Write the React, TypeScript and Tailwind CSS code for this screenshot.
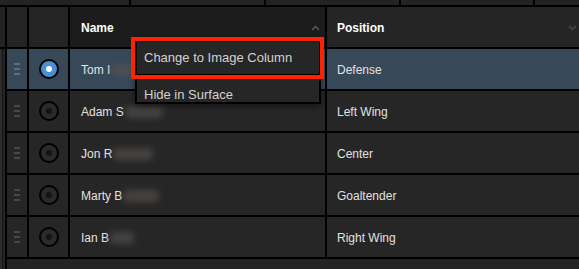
import { useState } from "react";

type Player = { first: string; blur: number; position: string };

const players: Player[] = [
  { first: "Tom I", blur: 26, position: "Defense" },
  { first: "Adam S", blur: 38, position: "Left Wing" },
  { first: "Jon R", blur: 40, position: "Center" },
  { first: "Marty B", blur: 36, position: "Goaltender" },
  { first: "Ian B", blur: 24, position: "Right Wing" },
];

function Grip({ active }: { active: boolean }) {
  const bar = active ? "bg-[#5d6d7b]" : "bg-[#474747]";
  return (
    <div className="flex flex-col gap-[3px]">
      <span className={`block w-[6px] h-[2px] ${bar}`} />
      <span className={`block w-[6px] h-[2px] ${bar}`} />
      <span className={`block w-[6px] h-[2px] ${bar}`} />
    </div>
  );
}

function Radio({ checked }: { checked: boolean }) {
  if (checked) {
    return (
      <div className="w-[20px] h-[20px] rounded-full border-2 border-black bg-[#4a8fd4] flex items-center justify-center">
        <span className="block w-[6px] h-[6px] rounded-full bg-white" />
      </div>
    );
  }
  return (
    <div className="w-[20px] h-[20px] rounded-full border-2 border-black bg-[#2a2a2a] flex items-center justify-center">
      <span className="block w-[6px] h-[6px] rounded-full bg-[#141414]" />
    </div>
  );
}

function Chevron({ up }: { up?: boolean }) {
  return (
    <svg width="9" height="6" viewBox="0 0 9 6" className="shrink-0">
      <polyline
        points={up ? "1,5 4.5,1.5 8,5" : "1,1 4.5,4.5 8,1"}
        fill="none"
        stroke={up ? "#5a5a5a" : "#4a4a4a"}
        strokeWidth="1.4"
      />
    </svg>
  );
}

export default function App() {
  const [selected, setSelected] = useState(0);

  return (
    <div className="w-[579px] h-[269px] overflow-hidden bg-black flex flex-col gap-[2px] font-['Liberation_Sans',Arial,sans-serif] relative">
      {/* strip of cells from the row above */}
      <div className="h-[5px] grid grid-cols-[129px_133px_133px_132px_1fr] gap-[2px]">
        <div className="bg-[#232323]" />
        <div className="bg-[#232323]" />
        <div className="bg-[#232323]" />
        <div className="bg-[#232323]" />
        <div className="bg-[#232323]" />
      </div>

      <div className="flex-1 flex gap-[2px] min-h-0">
        {/* left gutter */}
        <div className="w-[5px] flex flex-col gap-[2px]">
          <div className="h-[40px] bg-[#232323]" />
          <div className="flex-1 bg-[#242424] flex">
            <div className="w-[2px] bg-[#2c2c2c]" />
            <div className="w-[1px] bg-[#151515]" />
          </div>
        </div>

        {/* table */}
        <div className="flex-1 flex flex-col gap-[2px]">
          <div className="grid grid-cols-[20px_39px_255px_1fr] auto-rows-[40px] gap-[2px]">
            <div className="bg-[#242424]" />
            <div className="bg-[#242424]" />
            <div className="bg-[#1c1c1c] flex items-center justify-between pl-[11px] pr-[5px] pt-[2px]">
              <span className="text-[12px] font-bold text-white">Name</span>
              <Chevron up />
            </div>
            <div className="bg-[#252525] flex items-center justify-between pl-[10px] pr-[2px] pt-[2px]">
              <span className="text-[12px] font-bold text-white">Position</span>
              <Chevron />
            </div>

            {players.map((p, i) => {
              const on = i === selected;
              const bg = on ? "bg-[#374858]" : "bg-[#262626]";
              return (
                <div key={p.first} className="contents" onClick={() => setSelected(i)}>
                  <div className={`${bg} flex items-center justify-center`}>
                    <Grip active={on} />
                  </div>
                  <div className={`${bg} flex items-center justify-center`}>
                    <Radio checked={on} />
                  </div>
                  <div className={`${bg} flex items-center pl-[11px] pt-[1px] text-[12px] text-[#e2e2e2]`}>
                    <span>{p.first}</span>
                    <span
                      className="block h-[12px] ml-[1px] rounded-sm bg-[#5a5552] blur-[3px] opacity-60"
                      style={{ width: p.blur }}
                    />
                  </div>
                  <div className={`${bg} flex items-center pl-[10px] pt-[1px] text-[12px] text-[#e2e2e2]`}>
                    {p.position}
                  </div>
                </div>
              );
            })}
          </div>
          <div className="flex-1 bg-[#232323]" />
        </div>
      </div>

      {/* column context menu */}
      <div className="absolute left-[135px] top-[37px] w-[186px] h-[67px] bg-[#262626] border-2 border-black shadow-[0_2px_6px_rgba(0,0,0,0.5)] flex flex-col text-[13px] text-[#d2d2d2]">
        <div className="h-[38px] flex items-center pl-[7px]">Change to Image Column</div>
        <div className="flex-1 flex items-end pl-[7px] leading-[15px]">Hide in Surface</div>
      </div>
      <div className="absolute left-[131px] top-[37px] w-[193px] h-[42px] border-4 border-[#ff2200]">
        <div className="w-full h-full border border-black" />
      </div>
    </div>
  );
}
